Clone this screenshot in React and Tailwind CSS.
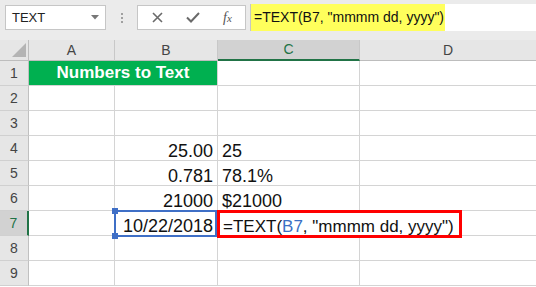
import React from "react";

const font = { fontFamily: '"Liberation Sans", Arial, sans-serif' };

// column layout: row header, A, B, C, D
const gridCols = "grid grid-cols-[29px_86px_103px_142px_1fr]";

const rows = [
  { n: 1, b: "", c: "" },
  { n: 2, b: "", c: "" },
  { n: 3, b: "", c: "" },
  { n: 4, b: "25.00", c: "25" },
  { n: 5, b: "0.781", c: "78.1%" },
  { n: 6, b: "21000", c: "$21000" },
  { n: 7, b: "10/22/2018", c: "formula" },
  { n: 8, b: "", c: "" },
  { n: 9, b: "", c: "" },
];

const cell = "h-[25px] border-r border-b border-[#d4d4d4] bg-white";

const RowHeader = ({ n }) => {
  const active = n === 7;
  return (
    <div
      className={
        "h-[25px] flex items-center justify-center text-[14px] border-b border-[#d0d0d0] " +
        (active
          ? "bg-[#d2d2d2] text-[#217346] border-r-2 border-r-[#217346]"
          : "bg-[#e6e6e6] text-[#444] border-r border-r-[#c0c0c0]")
      }
    >
      {n}
    </div>
  );
};

const App = () => {
  return (
    <div className="w-[536px] h-[287px] overflow-hidden bg-white" style={font}>
      {/* formula bar */}
      <div className="h-[40px] bg-[#ebebeb] flex items-start pt-[5px] pl-[5px]">
        <div className="w-[101px] h-[25px] bg-white border border-[#c6c6c6] flex items-center justify-between pl-[6px] pr-[6px]">
          <span className="text-[13px] text-[#222]">TEXT</span>
          <svg width="8" height="5" viewBox="0 0 8 5">
            <path d="M0 0 L8 0 L4 4.5 Z" fill="#777" />
          </svg>
        </div>
        <div className="w-[31px] h-[25px] flex flex-col items-center justify-center gap-[2px]">
          <span className="w-[2px] h-[2px] bg-[#a0a0a0]" />
          <span className="w-[2px] h-[2px] bg-[#a0a0a0]" />
          <span className="w-[2px] h-[2px] bg-[#a0a0a0]" />
        </div>
        <div className="w-[109px] h-[25px] bg-white border border-[#c6c6c6] flex items-center">
          <div className="w-[38px] flex justify-center">
            <svg width="11" height="11" viewBox="0 0 11 11">
              <path d="M1 1 L10 10 M10 1 L1 10" stroke="#6a6a6a" strokeWidth="1.6" />
            </svg>
          </div>
          <div className="w-[34px] flex justify-center">
            <svg width="14" height="11" viewBox="0 0 14 11">
              <path d="M1 5.5 L5 9.5 L13 1" stroke="#6a6a6a" strokeWidth="2" fill="none" />
            </svg>
          </div>
          <div className="w-[35px] flex justify-center">
            <span
              className="italic text-[14px] text-[#555]"
              style={{ fontFamily: '"Liberation Serif", "Times New Roman", serif' }}
            >
              f<span className="text-[11px]">x</span>
            </span>
          </div>
        </div>
        <div className="ml-[4px] -mt-[1px] flex-1 h-[27px] bg-white flex">
          <div className="w-[195px] h-full bg-[#ffff5c] border-l border-[#c6c6c6] flex items-center pl-[3px] text-[14px] text-[#111] whitespace-nowrap">
            =TEXT(B7, "mmmm dd, yyyy")
          </div>
        </div>
      </div>

      {/* sheet */}
      <div className="relative">
        <div className={gridCols}>
          <div className="h-[21px] bg-[#e6e6e6] border-r border-b border-[#bdbdbd] relative">
            <svg className="absolute right-[2px] bottom-[3px]" width="14" height="14" viewBox="0 0 14 14">
              <path d="M14 0 L14 14 L0 14 Z" fill="#b4b4b4" />
            </svg>
          </div>
          <div className="h-[21px] bg-[#e6e6e6] border-r border-r-[#c8c8c8] border-b border-b-[#bdbdbd] flex items-center justify-center text-[14px] text-[#444]">
            A
          </div>
          <div className="h-[21px] bg-[#e6e6e6] border-r border-r-[#c8c8c8] border-b border-b-[#bdbdbd] flex items-center justify-center text-[14px] text-[#444]">
            B
          </div>
          <div className="h-[21px] bg-[#d2d2d2] border-r border-r-[#c8c8c8] border-b-2 border-b-[#217346] flex items-center justify-center text-[14px] text-[#217346]">
            C
          </div>
          <div className="h-[21px] bg-[#e6e6e6] border-b border-b-[#bdbdbd] flex items-center justify-center text-[14px] text-[#444]">
            D
          </div>

          {rows.map((r) => (
            <React.Fragment key={r.n}>
              <RowHeader n={r.n} />
              {r.n === 1 ? (
                <div className="col-span-2 h-[25px] bg-[#00b050] border-r border-b border-[#d4d4d4] flex items-center justify-center text-[17px] font-bold text-white">
                  Numbers to Text
                </div>
              ) : (
                <>
                  <div className={cell} />
                  <div
                    className={
                      cell +
                      " flex items-end justify-end pr-[4px] text-[18px] leading-none text-[#111]" +
                      (r.n === 7 ? " bg-[#dce6f2]" : "")
                    }
                  >
                    {r.b}
                  </div>
                </>
              )}
              {r.c === "formula" ? (
                <div className="h-[25px] border-b border-[#d4d4d4] bg-white flex items-end pl-[5px] text-[17px] leading-none text-[#111] whitespace-nowrap overflow-visible relative z-10">
                  =TEX
                  <span className="inline-block w-[1px] h-[20px] bg-black -mb-[2px]" />
                  T(<span className="text-[#3b6fc4]">B7</span>, "mmmm dd, yyyy")
                </div>
              ) : (
                <div className={cell + " flex items-end pl-[4px] text-[18px] leading-none text-[#111]"}>
                  {r.c}
                </div>
              )}
              <div className={"h-[25px] border-b border-[#d4d4d4] bg-white"} />
            </React.Fragment>
          ))}
        </div>

        {/* selected cell B7 */}
        <div className="absolute left-[114px] top-[170px] w-[103px] h-[27px] border-2 border-[#3f6fc6] pointer-events-none">
          <span className="absolute -left-[4px] -top-[4px] w-[6px] h-[6px] bg-[#3f6fc6]" />
          <span className="absolute -left-[4px] -bottom-[4px] w-[6px] h-[6px] bg-[#3f6fc6]" />
        </div>

        {/* highlight box around C7 */}
        <div className="absolute left-[217px] top-[170px] w-[245px] h-[28px] border-[3px] border-[#ff0000] z-20 pointer-events-none" />
      </div>
    </div>
  );
};

export default App;
